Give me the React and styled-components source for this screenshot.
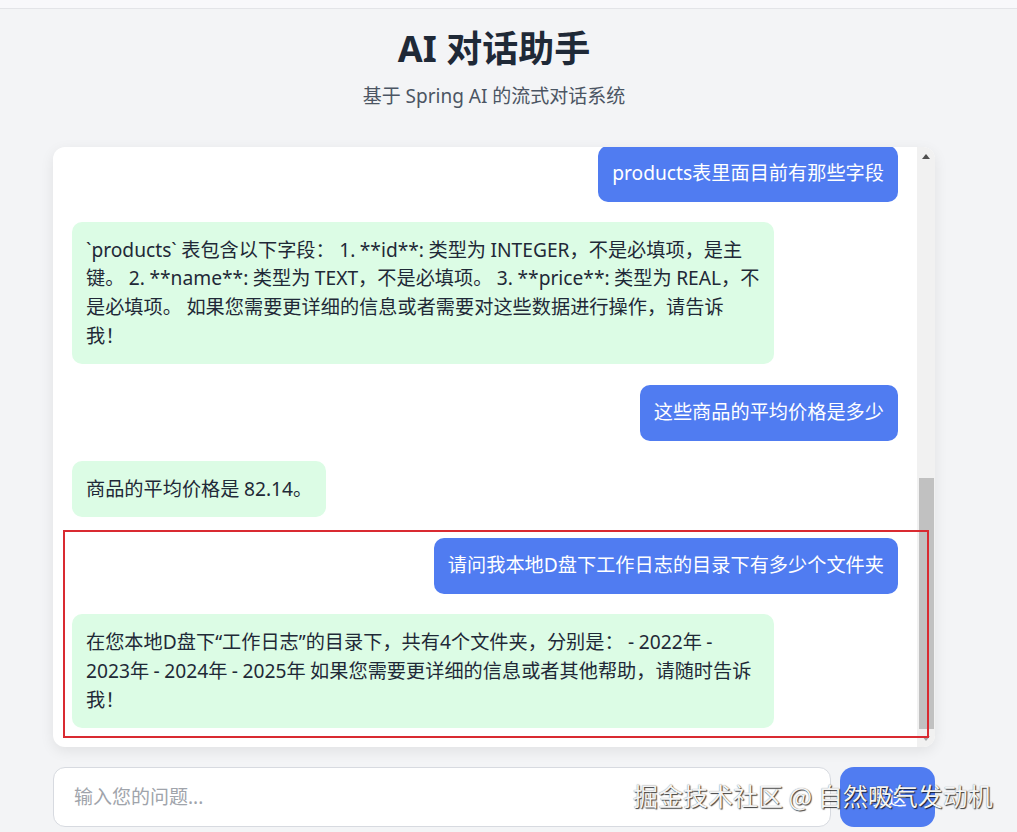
import React, { useLayoutEffect, useRef } from 'react'
import styled, { createGlobalStyle } from 'styled-components'

const messages = [
    { id: 1, role: 'user', text: '你好' },
    { id: 2, role: 'ai', text: '你好！我是基于 Spring AI 的对话助手，可以帮你查询数据库、读取本地文件等。请问有什么可以帮你的吗？' },
    { id: 3, role: 'user', text: '数据库里有哪些表' },
    { id: 4, role: 'ai', text: '当前数据库中共有以下几张表： 1. products 2. orders 3. customers 如果您需要查看某张表的结构或者数据，请告诉我！' },
    { id: 5, role: 'user', text: 'products表里面目前有那些字段' },
    { id: 6, role: 'ai', text: '`products` 表包含以下字段： 1. **id**: 类型为 INTEGER，不是必填项，是主键。 2. **name**: 类型为 TEXT，不是必填项。 3. **price**: 类型为 REAL，不是必填项。 如果您需要更详细的信息或者需要对这些数据进行操作，请告诉我！' },
    { id: 7, role: 'user', text: '这些商品的平均价格是多少' },
    { id: 8, role: 'ai', text: '商品的平均价格是 82.14。' },
    { id: 9, role: 'user', text: '请问我本地D盘下工作日志的目录下有多少个文件夹' },
    { id: 10, role: 'ai', text: '在您本地D盘下“工作日志”的目录下，共有4个文件夹，分别是： - 2022年 - 2023年 - 2024年 - 2025年 如果您需要更详细的信息或者其他帮助，请随时告诉我！' },
]

const ArrowUp = () => (
    <svg width='8' height='5' viewBox='0 0 8 5'>
        <path d='M0 5 L4 0 L8 5 Z' fill='#505050' />
    </svg>
)

const ArrowDown = () => (
    <svg width='8' height='5' viewBox='0 0 8 5'>
        <path d='M0 0 L8 0 L4 5 Z' fill='#a3a3a3' />
    </svg>
)

export default () => {
    const listRef = useRef(null)

    // chat list is always kept scrolled to the newest message
    useLayoutEffect(() => {
        const el = listRef.current
        if (el) el.scrollTop = el.scrollHeight
    }, [])

    return (
        <Page>
            <GlobalStyle />
            <TopStrip />
            <Main>
                <Header>
                    <Title>AI 对话助手</Title>
                    <Subtitle>基于 Spring AI 的流式对话系统</Subtitle>
                </Header>
                <ChatArea>
                    <Panel>
                        <MessageList ref={listRef}>
                            {messages.map(({ id, role, text }) => (
                                <Row key={id} mine={role === 'user'}>
                                    <Bubble mine={role === 'user'}>{text}</Bubble>
                                </Row>
                            ))}
                        </MessageList>
                        <ScrollBar>
                            <ScrollButton><ArrowUp /></ScrollButton>
                            <ScrollTrack>
                                <Thumb size={251} />
                            </ScrollTrack>
                            <ScrollButton><ArrowDown /></ScrollButton>
                        </ScrollBar>
                    </Panel>
                    <Highlight />
                </ChatArea>
                <InputBar>
                    <Input placeholder='输入您的问题...' />
                    <SendButton>发送</SendButton>
                </InputBar>
            </Main>
            <Watermark>掘金技术社区 @ 自然吸气发动机</Watermark>
        </Page>
    )
}


const GlobalStyle = createGlobalStyle`
    html, body {
        margin: 0;
        padding: 0;
        background: #f3f4f6;
    }
    body {
        font-family: "Noto Sans", "Noto Sans CJK SC", sans-serif;
    }
    * {
        box-sizing: border-box;
    }
`

const Page = styled.div`
    position: relative;
    min-height: 832px;
    background: #f3f4f6;
`

const TopStrip = styled.div`
    height: 9px;
    background: #f8f8fb;
    border-bottom: 1px solid #e3e4e8;
`

const Main = styled.div`
    width: 882px;
    margin-left: 53px;
`

const Header = styled.header`
    display: flex;
    flex-direction: column;
    align-items: center;
    padding-top: 18px;
`

const Title = styled.h1`
    margin: 0;
    font-size: 36px;
    line-height: 43px;
    font-weight: 700;
    color: #1f2937;
`

const Subtitle = styled.p`
    margin: 12px 0 0;
    font-size: 19px;
    line-height: 28px;
    color: #4b5563;
`

const ChatArea = styled.div`
    position: relative;
    margin-top: 37px;
`

const Panel = styled.div`
    display: flex;
    height: 600px;
    background: #fff;
    border-radius: 12px;
    overflow: hidden;
    box-shadow: 0 4px 14px rgba(0, 0, 0, 0.08);
`

const MessageList = styled.div`
    flex: 1;
    overflow: hidden;
    padding: 20px 19px 19px 19px;
    display: flex;
    flex-direction: column;
    gap: 20.5px;
`

const ScrollBar = styled.div`
    width: 18px;
    display: flex;
    flex-direction: column;
    background: #f1f1f1;
`

const ScrollButton = styled.div`
    height: 18px;
    display: flex;
    align-items: center;
    justify-content: center;
`

const ScrollTrack = styled.div`
    flex: 1;
    display: flex;
    flex-direction: column;
    justify-content: flex-end;
    padding: 0 1px 0 2px;
`

const Thumb = styled.div`
    height: ${props => props.size}px;
    background: #c1c1c1;
`

const Row = styled.div`
    display: flex;
    justify-content: ${props => props.mine ? 'flex-end' : 'flex-start'};
`

const Bubble = styled.div`
    max-width: 85%;
    padding: 13.6px 14px;
    border-radius: 10px;
    font-size: 19.2px;
    line-height: 28.8px;
    word-spacing: -0.5px;
    word-break: break-word;
    background: ${props => props.mine ? '#507cf1' : '#dcfce5'};
    color: ${props => props.mine ? '#ffffff' : '#1f2937'};
`

const Highlight = styled.div`
    position: absolute;
    left: 10px;
    top: 383px;
    width: 866px;
    height: 208px;
    border: 2px solid #d92a31;
    pointer-events: none;
`

const InputBar = styled.div`
    display: flex;
    gap: 9px;
    margin-top: 20px;
    height: 60px;
`

const Input = styled.input`
    flex: 1;
    border: 1px solid #d7dae0;
    border-radius: 12px;
    background: #fff;
    padding: 0 20px;
    font-family: "Noto Sans", "Noto Sans CJK SC", sans-serif;
    font-size: 19px;
    color: #1f2937;
    outline: none;

    &::placeholder {
        color: #a0a4ab;
    }
`

const SendButton = styled.button`
    width: 95px;
    border: none;
    border-radius: 14px;
    background: #507cf1;
    color: #fff;
    font-family: "Noto Sans", "Noto Sans CJK SC", sans-serif;
    font-size: 19px;
`

const Watermark = styled.div`
    position: absolute;
    left: 633px;
    top: 778px;
    font-family: "Noto Sans CJK SC", sans-serif;
    font-size: 25px;
    line-height: 34px;
    color: #f4f4f4;
    text-shadow: 1px 1px 1px rgba(0, 0, 0, 0.75), 0 0 1px rgba(0, 0, 0, 0.5);
    white-space: nowrap;
    pointer-events: none;
`
